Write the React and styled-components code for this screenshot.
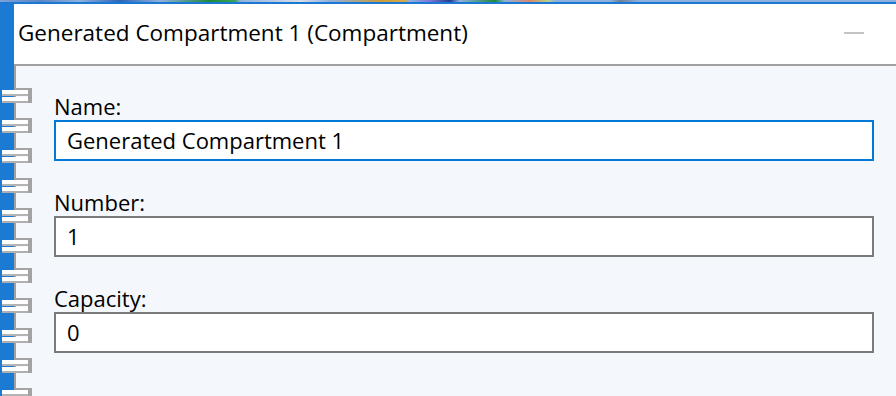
import React from 'react'
import styled, { createGlobalStyle } from 'styled-components'

const GlobalStyle = createGlobalStyle`
  html, body {
    margin: 0;
    padding: 0;
    background: #f4f7fc;
  }
  body {
    font-family: "Open Sans", "Noto Sans", sans-serif;
    color: #000;
  }
`

const Screen = styled.div`
  width: 896px;
  height: 396px;
  display: flex;
  flex-direction: column;
  overflow: hidden;
`

// taskbar sliver peeking in at the top edge
const TopStrip = styled.div`
  height: 2px;
  background: linear-gradient(
    to right,
    #7fa3d6 0,
    #5b86c6 40px,
    #8fb1de 80px,
    #2d66b5 120px,
    #8fb1de 160px,
    #1d8a3a 210px,
    #3aa455 235px,
    #8fb1de 240px,
    #d8dde6 300px,
    #8fb1de 330px,
    #c99b3a 380px,
    #d6a84a 405px,
    #8fb1de 410px,
    #7d78d8 430px,
    #243a8e 450px,
    #8fb1de 460px,
    #1c8a3a 495px,
    #8fb1de 505px,
    #d98868 530px,
    #b8cf88 548px,
    #8fb1de 555px,
    #8fb1de 610px,
    #6d7f99 620px,
    #8fb1de 640px,
    #8fb1de 896px
  );
`

const TopLine = styled.div`
  height: 2px;
  background: #1a78d2;
`

const Main = styled.div`
  flex: 1;
  display: flex;
  min-height: 0;
`

const Spine = styled.div`
  width: 14px;
  flex: none;
  background: #1b7bd4;
  display: flex;
  flex-direction: column;
  gap: 14px;
  padding-top: 84px;
  position: relative;
  z-index: 2;
`

const RingSvg = styled.svg`
  display: block;
  flex: none;
  width: 32px;
  height: 16px;
`

const Ring = () => (
  <RingSvg viewBox="0 0 32 16">
    <rect x="16" y="0" width="15" height="2" fill="#a3a3a3" />
    <rect x="28" y="0" width="4" height="15" fill="#a3a3a3" />
    <rect x="2" y="2" width="26" height="4" fill="#ffffff" />
    <rect x="2" y="6" width="26" height="2" fill="#b4b4b4" />
    <rect x="2" y="9" width="26" height="4" fill="#ffffff" />
    <rect x="2" y="13" width="26" height="2" fill="#b0b0b0" />
  </RingSvg>
)

const Window = styled.div`
  flex: 1;
  display: flex;
  flex-direction: column;
  min-width: 0;
`

const Header = styled.div`
  height: 60px;
  flex: none;
  background: #fff;
  border-bottom: 2px solid #a0a0a0;
  display: flex;
  align-items: center;
  padding: 0 32px 0 4px;
`

const Title = styled.div`
  flex: 1;
  font-size: 22.5px;
  padding-bottom: 3px;
`

const Minimize = styled.div`
  width: 20px;
  height: 2px;
  margin-top: -2px;
  background: #c4c4c4;
`

const Body = styled.div`
  flex: 1;
  background: #f4f7fc;
  border-left: 2px solid #a0a0a0;
  padding: 26px 22px 0 38px;
  display: flex;
  flex-direction: column;
  gap: 27px;
`

const Field = styled.div`
  display: flex;
  flex-direction: column;
`

const Label = styled.label`
  font-size: 22px;
  line-height: 28px;
`

const Input = styled.input`
  box-sizing: border-box;
  height: 41px;
  width: 100%;
  margin: 0;
  padding: 0 0 2px 11px;
  border: 2px solid ${p => (p.$focused ? '#0078d7' : '#7a7a7a')};
  border-radius: 0;
  outline: none;
  background: #fff;
  font-family: inherit;
  font-size: 22px;
  color: #000;
`

const fields = [
  { label: 'Name:', value: 'Generated Compartment 1', focused: true },
  { label: 'Number:', value: '1' },
  { label: 'Capacity:', value: '0' },
]

const App = () => (
  <>
    <GlobalStyle />
    <Screen>
      <TopStrip />
      <TopLine />
      <Main>
        <Spine>
          {Array.from({ length: 11 }).map((_, i) => (
            <Ring key={i} />
          ))}
        </Spine>
        <Window>
          <Header>
            <Title>Generated Compartment 1 (Compartment)</Title>
            <Minimize />
          </Header>
          <Body>
            {fields.map(f => (
              <Field key={f.label}>
                <Label>{f.label}</Label>
                <Input $focused={f.focused} defaultValue={f.value} readOnly />
              </Field>
            ))}
          </Body>
        </Window>
      </Main>
    </Screen>
  </>
)

export default App
